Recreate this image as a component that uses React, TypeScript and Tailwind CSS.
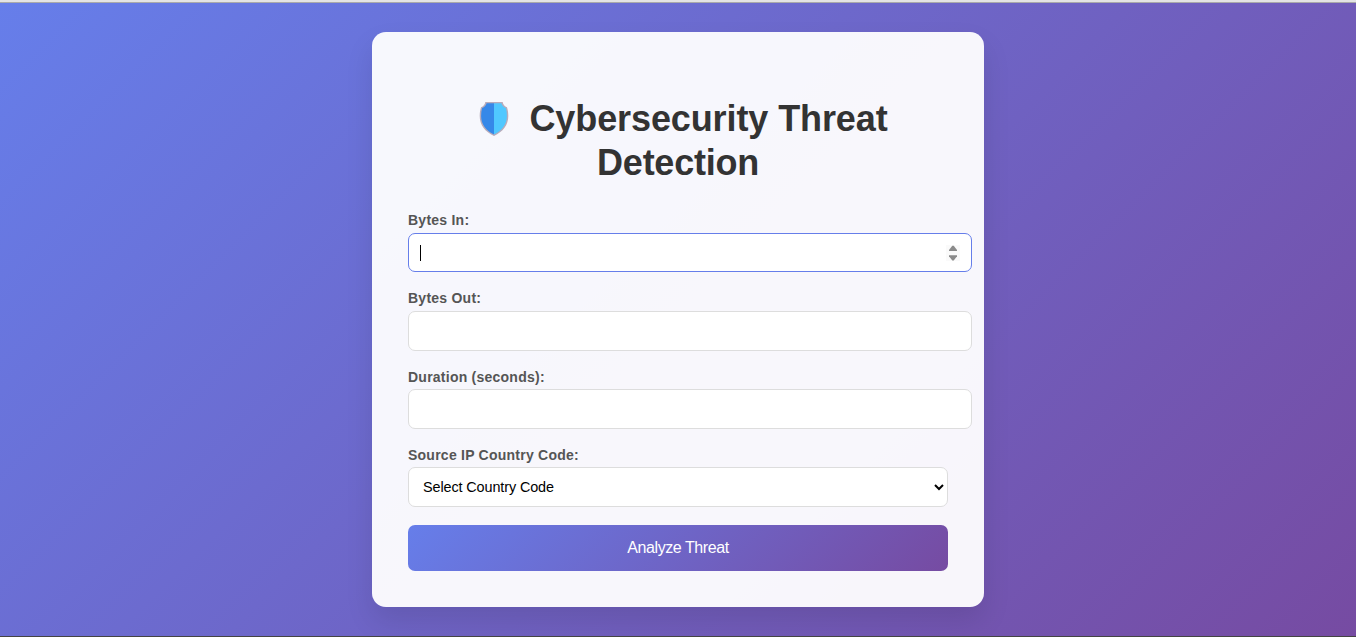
import React from "react";

function Shield() {
  return (
    <svg width="30" height="36" viewBox="0 0 30 36" className="mt-1 shrink-0" aria-hidden="true">
      <path d="M6.300 1H23.700C24 3.700 25.700 5.300 28 6.200 28.900 9 29.300 12 29.300 15c0 9-5.300 15.800-14.300 20C6 30.800.7 24 .7 15c0-3 .4-6 1.300-8.800C4.300 5.300 6 3.700 6.300 1Z" fill="#b8acbb" />
      <path d="M7.600 2.300H15V33.500C7.200 29.600 2.100 23.500 2.100 15c0-2.700.3-5.300 1-7.900C5.700 6 7.100 4.500 7.600 2.300Z" fill="#3688e8" />
      <path d="M22.400 2.300H15V33.500C22.800 29.600 27.900 23.500 27.900 15c0-2.700-.3-5.300-1-7.900C24.300 6 22.900 4.500 22.400 2.300Z" fill="#50c8ff" />
    </svg>
  );
}

function Label({ text, id }: { text: string; id: string }) {
  return (
    <label htmlFor={id} className="block h-[17px] text-[14px] leading-[16px] font-bold tracking-[0.24px] text-[#555]">
      {text}
    </label>
  );
}

export default function App() {
  return (
    <div className="flex h-[637px] flex-col overflow-hidden font-['Liberation_Sans',Arial,sans-serif]">
      <div className="h-[3px] shrink-0 border-b border-[#aaaaaa] bg-[#e4e4e4]" />
      <main className="flex flex-1 justify-center bg-[linear-gradient(135deg,#667eea_0%,#764ba2_100%)] pt-[29px]">
        <section className="flex h-[575px] w-[612px] flex-col rounded-[14px] bg-white/95 px-9 pt-[65px] shadow-[0_14px_28px_rgba(0,0,0,0.1)]">
          <h1 className="h-[88px] text-center text-[36px] leading-[44px] font-bold tracking-[-0.1px] text-[#333]">
            <span className="flex justify-center gap-[20px] pl-[11px]">
              <Shield />
              <span>Cybersecurity Threat</span>
            </span>
            <span className="block tracking-[-0.25px]">Detection</span>
          </h1>
          <form className="mt-[27px] flex flex-col" onSubmit={(e) => e.preventDefault()}>
            <Label text="Bytes In:" id="bytes-in" />
            <div id="bytes-in" className="mt-1 flex h-[39px] w-[564px] items-center justify-between rounded-[7px] border border-[#667eea] bg-white pr-[11px] pl-[11px]">
              <span className="h-4 w-px bg-black" />
              <span className="flex h-4 w-[14px] items-center justify-center bg-[#fafafa]">
                <svg width="8" height="16" viewBox="0 0 8 16" fill="#8a8a8a">
                  <path d="M3.300.7h1.400L8 5v1H0V5Z" />
                  <path d="M0 10.200h8v1l-3.300 4.200H3.300L0 11.200Z" />
                </svg>
              </span>
            </div>
            <div className="mt-[18px]">
              <Label text="Bytes Out:" id="bytes-out" />
              <input id="bytes-out" className="mt-1 block h-10 w-[564px] rounded-[7px] border border-[#ddd] bg-white px-[11px] outline-none" />
            </div>
            <div className="mt-[18px]">
              <Label text="Duration (seconds):" id="duration" />
              <input id="duration" className="mt-[3px] block h-10 w-[564px] rounded-[7px] border border-[#ddd] bg-white px-[11px] outline-none" />
            </div>
            <div className="mt-[18px]">
              <Label text="Source IP Country Code:" id="country" />
              <button id="country" type="button" className="mt-[3px] flex h-10 w-full items-center justify-between rounded-[7px] border border-[#ddd] bg-white pr-[3px] pl-[14px] text-[14.4px] tracking-[-0.1px] text-black">
                <span className="pt-px">Select Country Code</span>
                <svg width="10" height="7" viewBox="0 0 10 7" fill="none" stroke="#000" strokeWidth="2">
                  <path d="m1 1 4 4 4-4" />
                </svg>
              </button>
            </div>
            <button className="mt-[18px] h-[46px] w-full rounded-[7px] bg-[linear-gradient(135deg,#667eea_0%,#764ba2_100%)] text-[16px] tracking-[-0.43px] text-white">
              Analyze Threat
            </button>
          </form>
        </section>
      </main>
      <div className="h-px shrink-0 bg-[#444]" />
    </div>
  );
}
